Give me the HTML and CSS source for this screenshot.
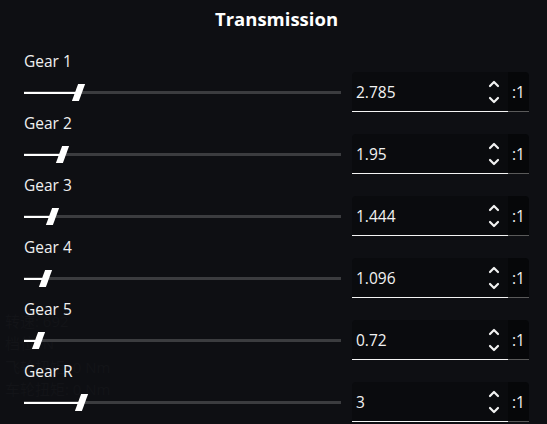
FILE: index.html
```html
<!DOCTYPE html>
<html lang="en">
<head>
    <meta charset="UTF-8">
    <meta name="viewport" content="width=device-width, initial-scale=1.0">
    <title>Transmission</title>
    <link rel="stylesheet" href="styles.css">
</head>
<body>
    <!-- faint dashboard behind the panel -->
    <div class="ghost">
        <div class="ghost-line" style="top: 311px">转速: 692</div>
        <div class="ghost-line" style="top: 333px">档位: N</div>
        <div class="ghost-line" style="top: 357px">飞轮扭矩: 0 Nm</div>
        <div class="ghost-line" style="top: 379px">车轮扭矩: 0 Nm</div>
    </div>

    <div class="panel">
        <h1>Transmission</h1>

        <div class="gears">
            <div class="gear">
                <label>Gear 1</label>
                <div class="controls">
                    <div class="slider">
                        <div class="fill" style="width: 17%"></div>
                        <div class="thumb" style="left: 17%"></div>
                    </div>
                    <div class="field">
                        <input type="text" value="2.785">
                        <svg class="spin" width="12" height="26" viewBox="0 0 12 26"><path d="M2 7l4-4 4 4M2 19l4 4 4-4"/></svg>
                    </div>
                    <div class="suffix">:1</div>
                </div>
            </div>

            <div class="gear">
                <label>Gear 2</label>
                <div class="controls">
                    <div class="slider">
                        <div class="fill" style="width: 11.9%"></div>
                        <div class="thumb" style="left: 11.9%"></div>
                    </div>
                    <div class="field">
                        <input type="text" value="1.95">
                        <svg class="spin" width="12" height="26" viewBox="0 0 12 26"><path d="M2 7l4-4 4 4M2 19l4 4 4-4"/></svg>
                    </div>
                    <div class="suffix">:1</div>
                </div>
            </div>

            <div class="gear">
                <label>Gear 3</label>
                <div class="controls">
                    <div class="slider">
                        <div class="fill" style="width: 8.8%"></div>
                        <div class="thumb" style="left: 8.8%"></div>
                    </div>
                    <div class="field">
                        <input type="text" value="1.444">
                        <svg class="spin" width="12" height="26" viewBox="0 0 12 26"><path d="M2 7l4-4 4 4M2 19l4 4 4-4"/></svg>
                    </div>
                    <div class="suffix">:1</div>
                </div>
            </div>

            <div class="gear">
                <label>Gear 4</label>
                <div class="controls">
                    <div class="slider">
                        <div class="fill" style="width: 6.7%"></div>
                        <div class="thumb" style="left: 6.7%"></div>
                    </div>
                    <div class="field">
                        <input type="text" value="1.096">
                        <svg class="spin" width="12" height="26" viewBox="0 0 12 26"><path d="M2 7l4-4 4 4M2 19l4 4 4-4"/></svg>
                    </div>
                    <div class="suffix">:1</div>
                </div>
            </div>

            <div class="gear">
                <label>Gear 5</label>
                <div class="controls">
                    <div class="slider">
                        <div class="fill" style="width: 4.4%"></div>
                        <div class="thumb" style="left: 4.4%"></div>
                    </div>
                    <div class="field">
                        <input type="text" value="0.72">
                        <svg class="spin" width="12" height="26" viewBox="0 0 12 26"><path d="M2 7l4-4 4 4M2 19l4 4 4-4"/></svg>
                    </div>
                    <div class="suffix">:1</div>
                </div>
            </div>

            <div class="gear">
                <label>Gear R</label>
                <div class="controls">
                    <div class="slider">
                        <div class="fill" style="width: 18.1%"></div>
                        <div class="thumb" style="left: 18.1%"></div>
                    </div>
                    <div class="field">
                        <input type="text" value="3">
                        <svg class="spin" width="12" height="26" viewBox="0 0 12 26"><path d="M2 7l4-4 4 4M2 19l4 4 4-4"/></svg>
                    </div>
                    <div class="suffix">:1</div>
                </div>
            </div>
        </div>
    </div>
</body>
</html>
```

FILE: styles.css
```css
* {
    box-sizing: border-box;
    margin: 0;
    padding: 0;
    font-family: 'Open Sans', 'Noto Sans CJK SC', sans-serif;
}

body {
    background-color: #0e0f13;
    color: #f2f2f2;
    width: 547px;
    height: 424px;
    overflow: hidden;
    position: relative;
}

.ghost {
    position: absolute;
    left: 5px;
    top: 0;
}

.ghost-line {
    position: absolute;
    left: 0;
    white-space: nowrap;
    font-size: 15px;
    line-height: 20px;
    color: #131418;
}

.panel {
    position: relative;
    padding: 7px 18px 0 24px;
}

h1 {
    text-align: center;
    font-size: 18.5px;
    font-weight: 700;
    line-height: 24px;
    color: #fff;
    margin-bottom: 20px;
}

.gear {
    height: 62px;
}

.gear label {
    display: block;
    font-size: 15.5px;
    line-height: 20px;
    color: #f0f0f0;
}

.controls {
    display: flex;
    align-items: center;
    height: 41px;
    padding-top: 1px;
}

.slider {
    position: relative;
    width: 317px;
    height: 3px;
    background: #3b3c3f;
    margin-right: 11px;
}

.fill {
    height: 2px;
    background: #fff;
    margin-top: 1px;
}

.thumb {
    position: absolute;
    top: -7px;
    width: 7px;
    height: 17px;
    margin-left: -3px;
    background: #fff;
    transform: skewX(-20deg);
}

.field {
    display: flex;
    align-items: center;
    width: 156px;
    height: 40px;
    background: #0a0b0e;
    border-bottom: 1px solid #f4f4f4;
    border-radius: 4px 0 0 0;
    padding: 0 6px 0 4px;
}

.field input {
    flex: 1;
    min-width: 0;
    background: transparent;
    border: none;
    outline: none;
    color: #f2f2f2;
    font-size: 15.5px;
}

.spin {
    fill: none;
    stroke: #f2f2f2;
    stroke-width: 2.2;
    stroke-linecap: round;
    stroke-linejoin: round;
    margin-right: 2px;
}

.suffix {
    display: flex;
    align-items: center;
    justify-content: center;
    width: 21px;
    height: 40px;
    background: #060709;
    border-bottom: 1px solid #5a5a5a;
    border-radius: 0 4px 0 0;
    font-size: 15.5px;
    color: #f2f2f2;
}
```
